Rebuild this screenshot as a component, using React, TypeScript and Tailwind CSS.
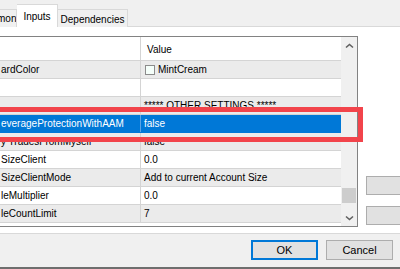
import React from 'react'

type Row = { name: string; value: string; swatch?: boolean; selected?: boolean }

const rows: Row[] = [
  { name: 'ardColor', value: 'MintCream', swatch: true },
  { name: '', value: '' },
  { name: '', value: '***** OTHER SETTINGS *****' },
  { name: 'everageProtectionWithAAM', value: 'false', selected: true },
  { name: 'y TradesFromMyself', value: 'false' },
  { name: 'SizeClient', value: '0.0' },
  { name: 'SizeClientMode', value: 'Add to current Account Size' },
  { name: 'leMultiplier', value: '0.0' },
  { name: 'leCountLimit', value: '7' },
]

function Chevron({ down }: { down?: boolean }) {
  return (
    <svg width="9" height="6" viewBox="0 0 9 6">
      <path
        d={down ? 'M1 1.5 L4.5 4.5 L8 1.5' : 'M1 4.5 L4.5 1.5 L8 4.5'}
        fill="none"
        stroke="#606060"
        strokeWidth="1.6"
      />
    </svg>
  )
}

export default function App() {
  return (
    <div className="relative w-[400px] h-[269px] overflow-hidden bg-[#f0f0f0] flex flex-col text-[10px] text-black font-['Liberation_Sans',Arial,sans-serif]">
      {/* tabs */}
      <div className="h-[27px] flex items-end border-b border-[#d9d9d9] bg-[#f0f0f0] shrink-0">
        <div className="h-[18px] w-[17px] bg-[#f0f0f0] border-r border-t border-[#d9d9d9] overflow-hidden flex items-center -mb-px">
          <span className="-ml-[3px]">mon</span>
        </div>
        <div className="h-[23px] w-[41px] bg-white border-t border-r border-[#d9d9d9] flex items-center justify-center -mb-px relative z-10 pt-[1px]">
          Inputs
        </div>
        <div className="h-[18px] w-[70px] bg-[#f0f0f0] border-r border-t border-[#d9d9d9] flex items-center justify-center -mb-px pt-[1px]">
          Dependencies
        </div>
      </div>

      {/* tab page */}
      <div className="h-[207px] bg-white border-b border-[#d9d9d9] flex pt-[9px] shrink-0">
        <div className="w-[358px] h-[191px] shrink-0 border-t border-b border-r border-[#828282] flex">
          <div className="flex-1 flex flex-col">
            <div className="h-[24px] flex border-b border-[#d4d4d4]">
              <div className="w-[141px] border-r border-[#d4d4d4]" />
              <div className="flex-1 flex items-center pl-[6px] pt-[1px]">Value</div>
            </div>
            {rows.map((r, i) => (
              <div
                key={i}
                className={
                  'h-[18px] flex border-b ' +
                  (r.selected
                    ? 'bg-[#0078d7] text-white border-[#0078d7]'
                    : i % 2 === 0
                      ? 'bg-[#ebebeb] border-[#d4d4d4]'
                      : 'bg-white border-[#d4d4d4]')
                }
              >
                <div
                  className={
                    'w-[141px] border-r flex items-center whitespace-nowrap overflow-hidden ' +
                    (r.selected ? 'border-[#5aa3e6]' : 'border-[#d4d4d4]')
                  }
                >
                  <span className="pl-px">{r.name}</span>
                </div>
                <div className="flex-1 flex items-center pl-[3px] whitespace-nowrap overflow-hidden">
                  {r.swatch && (
                    <span className="w-[10px] h-[10px] border border-[#8c8c8c] bg-[#f5fffa] mr-[3px] ml-px" />
                  )}
                  {r.value}
                </div>
              </div>
            ))}
          </div>
          <div className="w-[16px] bg-[#f0f0f0] flex flex-col">
            <div className="h-[17px] flex items-center justify-center">
              <Chevron />
            </div>
            <div className="flex-1" />
            <div className="h-[15px] mx-px bg-[#cdcdcd] mb-[6px]" />
            <div className="h-[17px] flex items-center justify-center">
              <Chevron down />
            </div>
          </div>
        </div>
        <div className="ml-[8px] flex flex-col shrink-0">
          <div className="mt-[140px] w-[60px] h-[19px] bg-[#e1e1e1] border border-[#adadad]" />
          <div className="mt-[11px] w-[60px] h-[19px] bg-[#e1e1e1] border border-[#adadad]" />
        </div>
      </div>

      {/* bottom buttons */}
      <div className="flex-1 flex justify-end items-start pt-[6px] pr-[7px] gap-[8px] border-b-2 border-[#6e6e6e]">
        <button className="w-[67px] h-[20px] bg-[#e1e1e1] border-2 border-[#0078d7] flex items-center justify-center text-[11px]">
          OK
        </button>
        <button className="w-[67px] h-[20px] bg-[#e1e1e1] border border-[#adadad] flex items-center justify-center text-[11px]">
          Cancel
        </button>
      </div>

      {/* red highlight annotation */}
      <div className="absolute left-[-6px] top-[107px] w-[369px] h-[35px] border-[5px] border-[#f2444b] pointer-events-none" />
    </div>
  )
}
